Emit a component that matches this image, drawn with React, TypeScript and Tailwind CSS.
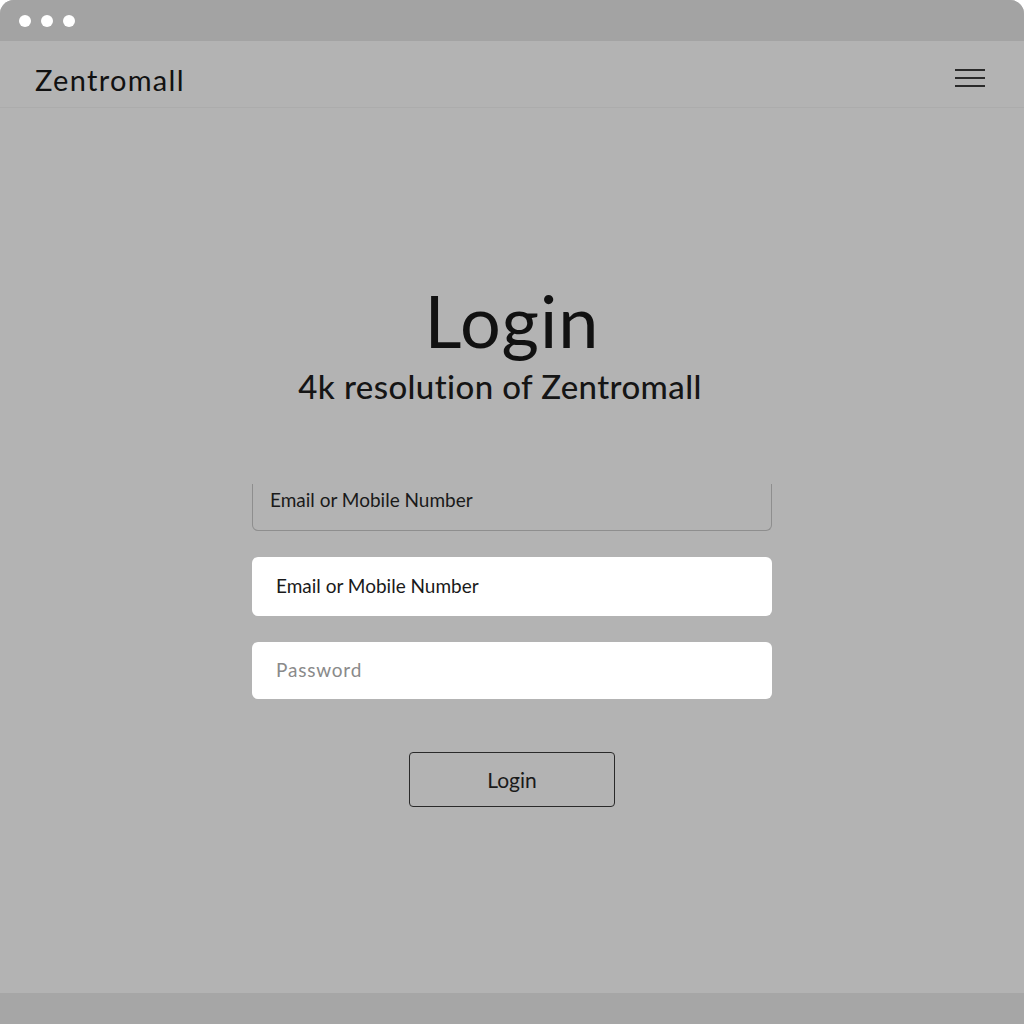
export default function App() {
  const font = { fontFamily: "Lato, 'Noto Sans', sans-serif" }

  return (
    <div className="w-[1024px] h-[1024px] bg-white" style={font}>
      <div className="flex h-full flex-col overflow-hidden rounded-t-[14px] bg-[#b3b3b3]">
        {/* window chrome */}
        <div className="flex h-[41px] items-center gap-[10px] bg-[#a3a3a3] pl-[19px]">
          <span className="h-[12px] w-[12px] rounded-full bg-white" />
          <span className="h-[12px] w-[12px] rounded-full bg-white" />
          <span className="h-[12px] w-[12px] rounded-full bg-white" />
        </div>

        {/* header */}
        <header className="flex h-[67px] items-center justify-between border-b border-[#acacac] pl-[35px] pr-[39px]">
          <span className="pt-[12px] text-[29px] tracking-[1.3px] text-[#111]">Zentromall</span>
          <div className="flex w-[30px] flex-col gap-[6px] pt-[8px]">
            <span className="h-[2px] w-full bg-[#2a2a2a]" />
            <span className="h-[2px] w-full bg-[#2a2a2a]" />
            <span className="h-[2px] w-full bg-[#2a2a2a]" />
          </div>
        </header>

        {/* main */}
        <main className="flex flex-1 flex-col items-center">
          <h1 className="mt-[172px] text-[72px] leading-[80px] tracking-[1px] text-[#111]">Login</h1>
          <p className="mr-[24px] mt-[6px] text-[33px] font-medium leading-[40px] tracking-[0.4px] text-[#151515]">
            4k resolution of Zentromall
          </p>

          <div className="mt-[78px] flex w-[520px] flex-col">
            <div className="flex h-[47px] items-start rounded-b-[6px] border-x border-b border-[#8e8e8e] pl-[17px] pt-[4px] text-[19px] leading-[24px] text-[#1a1a1a]">
              Email or Mobile Number
            </div>
            <div className="mt-[26px] flex h-[59px] items-center rounded-[6px] bg-white pl-[24px] text-[19px] text-[#1a1a1a]">
              Email or Mobile Number
            </div>
            <div className="mt-[26px] flex h-[57px] items-center rounded-[6px] bg-white pl-[24px] text-[19px] tracking-[0.8px] text-[#8a8a8a]">
              Password
            </div>
          </div>

          <button className="mt-[53px] flex h-[55px] w-[206px] items-center justify-center rounded-[4px] border-[1.5px] border-[#2a2a2a] text-[21px] text-[#1a1a1a]">
            Login
          </button>
        </main>

        {/* bottom bar */}
        <div className="h-[31px] bg-[#a6a6a6]" />
      </div>
    </div>
  )
}
